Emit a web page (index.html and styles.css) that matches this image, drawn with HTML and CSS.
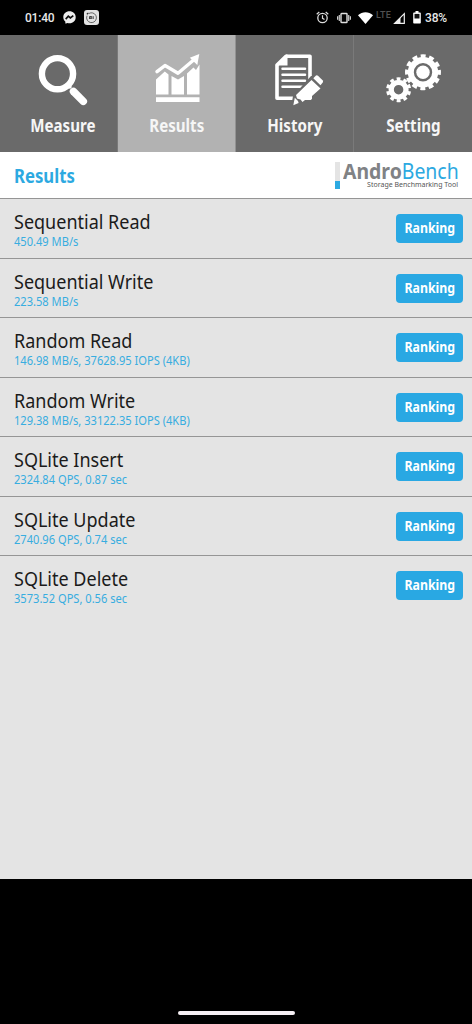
FILE: index.html
```html
<!DOCTYPE html>
<html lang="en">
<head>
<meta charset="utf-8">
<title>AndroBench</title>
<link rel="stylesheet" href="styles.css">
</head>
<body>
<div class="screen">
  <header class="status">
    <div class="status-left">
      <span class="clock">01:40</span>
      <svg class="messenger" viewBox="0 0 13 13"><path d="M6.5.3C2.9.3.3 2.8.3 6.2c0 1.8.8 3.2 2 4.3l.1 1.7c0 .4.3.5.6.4l1.5-.6c.6.1 1.3.2 2 .2 3.600 0 6.200-2.500 6.200-6S10.100.3 6.500.3z" fill="#eee"/><path d="M2.700 8.100 5.300 5.100 7.400 6.900 10.300 4.600" fill="none" stroke="#111" stroke-width="1.700"/></svg>
      <svg class="mi" viewBox="0 0 15 15"><rect width="15" height="15" rx="3" fill="#e2e2e2"/><circle cx="7.500" cy="7.700" r="4.900" fill="none" stroke="#555" stroke-width=".8" stroke-dasharray="27 3.700" transform="rotate(-120 7.500 7.700)"/><path d="M2.800 4.300l1.600-1.200" stroke="#222" stroke-width="1.200"/><path d="M5.500 9V6.500h2.200V9M6.600 7.300V9M9.200 6.200V9" fill="none" stroke="#333" stroke-width=".9"/></svg>
    </div>
    <div class="status-right">
      <svg class="alarm" viewBox="0 0 13 13"><circle cx="6.500" cy="7" r="4.700" fill="none" stroke="#ddd" stroke-width="1.300"/><path d="M6.500 4.300v3l2 1.200M.7 3.200 3.300 1M12.300 3.200 9.700 1" fill="none" stroke="#ddd" stroke-width="1.200"/></svg>
      <svg class="vibrate" viewBox="0 0 14 12"><rect x="4" y="1.500" width="6" height="9" rx=".6" fill="none" stroke="#ddd" stroke-width="1.400"/><path d="M2.300 3v6M.6 4.300v3.400M11.700 3v6M13.400 4.300v3.400" stroke="#ccc" stroke-width="1.200"/></svg>
      <svg class="wifi" viewBox="0 0 15 12"><path d="M0 3.200C4.300-.7 10.700-.7 15 3.200L7.500 12z" fill="#fff"/></svg>
      <span class="lte">LTE</span>
      <svg class="signal" viewBox="0 0 12 12"><path d="M11.300 1.600v9.700H1.600z" fill="none" stroke="#eee" stroke-width="1.200"/><path d="M7.500 5.500V11.500H1.500z" fill="#eee"/></svg>
      <svg class="battery" viewBox="0 0 8 13"><path d="M2.500 0h3v1.500H7q.8 0 .8.800v9.400q0 .8-.8.800H1q-.8 0-.8-.8V2.300q0-.8.8-.8h1.500z" fill="#fff"/><path d="M1.500 2.900h5v4.600h-5z" fill="#111"/></svg>
      <span class="percent">38%</span>
    </div>
  </header>

  <nav class="tabs">
    <div class="tab tab-measure">
      <svg class="tab-icon" viewBox="0 35 118 74"><circle cx="57.500" cy="73.700" r="15.600" fill="none" stroke="#fff" stroke-width="6.400"/><path d="M67 84l4 4" stroke="#fff" stroke-width="3"/><path d="M73.500 91.500 83.300 101.300" stroke="#fff" stroke-width="7.500" stroke-linecap="round"/></svg>
      <span class="tab-label"><span class="narrow">Measure</span></span>
    </div>
    <div class="tab tab-results">
      <svg class="tab-icon" viewBox="118 35 118 74"><path d="M156 79.500 164.800 71.500 168.500 74.500V94.500H156zM171.500 76 178 79.500 184 76V94.500H171.500zM187 73.500 193.500 67.500 196 70 199.500 64.500V94.500H187z" fill="#fff"/><path d="M156 97.200h43.500v4.800H156z" fill="#fff"/><path d="M157 71.700 165 65.500 178 73.200 194.500 59.300" fill="none" stroke="#fff" stroke-width="3.400" stroke-linecap="round" stroke-linejoin="round"/><path d="M199.300 54 189.800 57.700 197.300 65z" fill="#fff"/></svg>
      <span class="tab-label"><span class="narrow">Results</span></span>
    </div>
    <div class="tab tab-history">
      <svg class="tab-icon" viewBox="236 35 118 74"><path d="M286 56.200h24V98.300H277V65z" fill="none" stroke="#fff" stroke-width="3.600" stroke-linejoin="round"/><path d="M275.500 65.500 286 54.500h1.500V65.500z" fill="#fff"/><path d="M282.500 68.800h22.500M282.500 74.800h22.500M282.500 80.800h22.500M282.500 86.800h20" stroke="#fff" stroke-width="2.500" stroke-linecap="round"/><path d="M293 96 311 76 314 76 314 88 299 102 292 102z" fill="#6a6a6a"/><path d="M296 95 311.500 80 320.500 88.500 312 96V98.500L310.500 100H305L302.500 102 300.500 99.500 297 98.500z" fill="#fff"/><path d="M313.300 78.300 316 75.500Q317 75 318 75.800L322.800 80.500Q323.400 81.500 322.700 82.500L320.500 85.300z" fill="#fff"/><path d="M294.800 97.800 293.300 105.200 298.600 103 298 101z" fill="#fff"/></svg>
      <span class="tab-label"><span class="narrow">History</span></span>
    </div>
    <div class="tab tab-setting">
      <svg class="tab-icon" viewBox="354 35 118 74">
        <circle cx="423" cy="72.200" r="12.200" fill="none" stroke="#fff" stroke-width="6"/>
        <circle cx="423" cy="72.200" r="16.200" fill="none" stroke="#fff" stroke-width="3.600" pathLength="120" stroke-dasharray="5.800 4.200" transform="rotate(-98 423 72.200)"/>
        <circle cx="423" cy="72.200" r="6.700" fill="#fff"/>
        <circle cx="398.600" cy="89.700" r="7.400" fill="none" stroke="#fff" stroke-width="5.300"/>
        <circle cx="398.600" cy="89.700" r="11" fill="none" stroke="#fff" stroke-width="3" pathLength="100" stroke-dasharray="5.500 4.500" transform="rotate(-100 398.600 89.700)"/>
      </svg>
      <span class="tab-label"><span class="narrow">Setting</span></span>
    </div>
  </nav>

  <section class="heading">
    <h1><span class="narrow">Results</span></h1>
    <div class="brand">
      <span class="brand-bar"></span>
      <div class="brand-text">
        <div class="brand-name"><span class="narrow"><b>Andro</b><i>Bench</i></span></div>
        <div class="brand-tag">Storage Benchmarking Tool</div>
      </div>
    </div>
  </section>

  <main class="list">
    <div class="row"><div class="info"><div class="name">Sequential Read</div><div class="value">450.49 MB/s</div></div><div class="rank"><span class="narrow">Ranking</span></div></div>
    <div class="row"><div class="info"><div class="name">Sequential Write</div><div class="value">223.58 MB/s</div></div><div class="rank"><span class="narrow">Ranking</span></div></div>
    <div class="row"><div class="info"><div class="name">Random Read</div><div class="value">146.98 MB/s, 37628.95 IOPS (4KB)</div></div><div class="rank"><span class="narrow">Ranking</span></div></div>
    <div class="row"><div class="info"><div class="name">Random Write</div><div class="value">129.38 MB/s, 33122.35 IOPS (4KB)</div></div><div class="rank"><span class="narrow">Ranking</span></div></div>
    <div class="row"><div class="info"><div class="name">SQLite Insert</div><div class="value">2324.84 QPS, 0.87 sec</div></div><div class="rank"><span class="narrow">Ranking</span></div></div>
    <div class="row"><div class="info"><div class="name">SQLite Update</div><div class="value">2740.96 QPS, 0.74 sec</div></div><div class="rank"><span class="narrow">Ranking</span></div></div>
    <div class="row"><div class="info"><div class="name">SQLite Delete</div><div class="value">3573.52 QPS, 0.56 sec</div></div><div class="rank"><span class="narrow">Ranking</span></div></div>
  </main>

  <footer class="navbar"><span class="pill"></span></footer>
</div>
</body>
</html>
```
FILE: styles.css
```css
* { box-sizing: border-box; }
body { margin: 0; background: #000; font-family: "Noto Sans", "Open Sans", sans-serif; }
svg { display: block; flex: none; }
.screen { width: 472px; height: 1024px; display: flex; flex-direction: column; overflow: hidden; }
.narrow { display: inline-block; white-space: nowrap; transform: scaleX(.9); transform-origin: center; }

.status { height: 35px; flex: none; display: flex; justify-content: space-between; padding: 0 25px 0 25px; color: #e8e8e8; font-family: Roboto, sans-serif; font-weight: 500; }
.status-left, .status-right { display: flex; align-items: center; }
.clock { font-size: 12px; line-height: 35px; width: 38px; padding-top: 1px; letter-spacing: -.2px; }
.messenger { width: 13px; height: 13px; margin-right: 8px; }
.mi { width: 15px; height: 15px; }
.alarm { width: 13px; height: 13px; margin-right: 8px; }
.vibrate { width: 14px; height: 12px; margin-right: 7px; }
.wifi { width: 15px; height: 12px; margin-right: 3px; }
.lte { font-size: 9px; color: #505050; width: 17px; line-height: 12px; margin-top: -6px; letter-spacing: .2px; }
.signal { width: 12px; height: 12px; margin-right: 8px; }
.battery { width: 8px; height: 13px; margin-right: 4px; }
.percent { font-size: 12px; line-height: 35px; padding-top: 1px; letter-spacing: -.2px; }

.tabs { height: 117px; flex: none; display: grid; grid-template-columns: repeat(4, 118px); background: #6a6a6a; color: #fff; }
.tab { display: flex; flex-direction: column; border-right: 1px solid #7a7a7a; }
.tab:last-child { border-right: 0; }
.tab-results { background: #b2b2b2; border-right-color: #929292; }
.tab-icon { width: 118px; height: 74px; }
.tab-label { font-size: 18px; font-weight: 700; line-height: 32px; text-align: center; color: #f6f6f6; }
.tab-label .narrow { transform: scaleX(.84); }
.tab-measure .tab-label { padding-left: 8px; }
.tab-setting .tab-label { padding-left: 1px; }

.heading { height: 47px; flex: none; background: #fff; border-bottom: 1px solid #959595; display: flex; justify-content: space-between; padding: 0 14px; }
h1 { margin: 0; font-size: 19px; line-height: 48px; color: #2ca9e1; }
h1 .narrow { transform-origin: left; transform: scaleX(.88); }
.brand { display: flex; padding-top: 10px; width: 123px; }
.brand-bar { width: 5px; height: 27px; flex: none; margin-right: 3px; background: linear-gradient(#e4e4e4 19px, #2ca9e1 19px); }
.brand-text { width: 115px; }
.brand-name { height: 18px; font-size: 21px; line-height: 18px; color: #808285; }
.brand-name .narrow { transform-origin: left; transform: scaleX(.925); }
.brand-name i { font-style: normal; color: #2ca9e1; }
.brand-tag { font-size: 7px; line-height: 10px; color: #555; text-align: right; white-space: nowrap; }

.list { height: 680px; flex: none; background: #e4e4e4; }
.row { height: 59.550px; display: flex; justify-content: space-between; padding: 0 9px 0 14px; border-bottom: 1px solid #959595; }
.row:last-child { border-bottom: 0; }
.info { padding-top: 9px; white-space: nowrap; }
.name { font-size: 20px; line-height: 28px; color: #1b1b1b; transform: scaleX(.9); transform-origin: left; }
.value { font-size: 12px; line-height: 14px; margin-top: -1px; color: #38ade0; transform: scaleX(.925); transform-origin: left; }
.rank { width: 67px; height: 29px; margin-top: 15px; border-radius: 4px; background: #29a8e3; color: #fff; font-size: 14px; font-weight: 700; line-height: 27px; text-align: center; }
.rank .narrow { transform: scaleX(.88); }

.navbar { flex: 1; display: flex; justify-content: center; align-items: flex-end; padding-bottom: 9px; }
.pill { width: 117px; height: 4px; border-radius: 2px; background: #f6f0f4; }
```
